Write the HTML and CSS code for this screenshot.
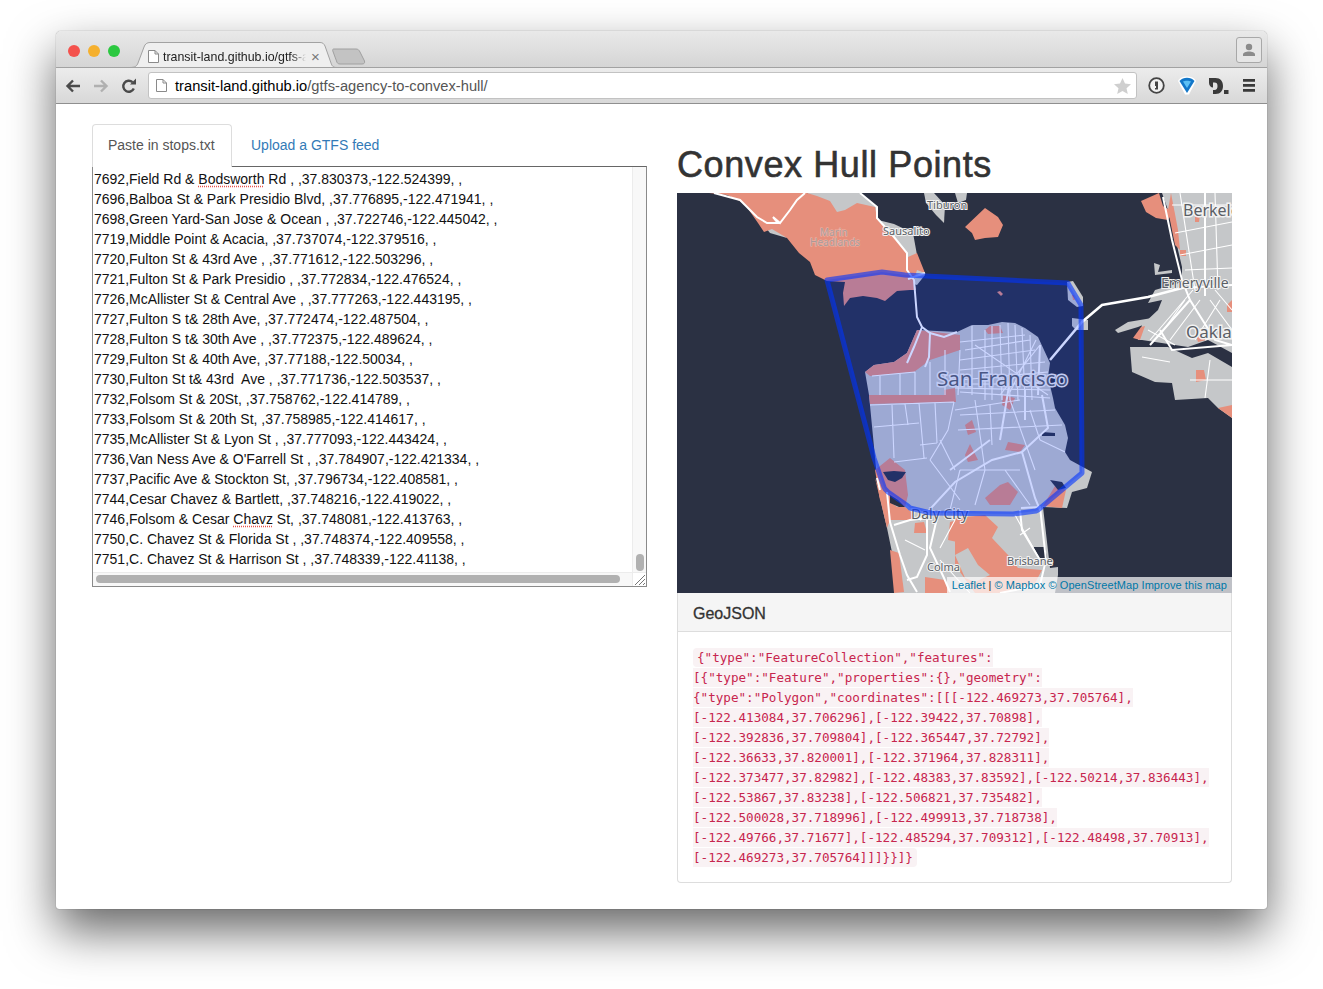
FILE: index.html
```html
<!DOCTYPE html>
<html lang="en">
<head>
  <meta charset="UTF-8" />
  <title>Convex Hull Points</title>
  <link rel="stylesheet" href="styles.css">
</head>
<body>
  <div class="window">

    <div class="tab-strip">
      <div class="lights">
        <span class="light red"></span>
        <span class="light amber"></span>
        <span class="light green"></span>
      </div>
      <div class="tab">
        <svg class="tab-shape" width="207" height="26" viewBox="0 0 207 26">
          <path class="tab-fill" d="M0 25.500C5 25.500 7 24 8 21L14 5C15 2 17 .5 20 .5H190C193 .5 194 2 195 4L201 21C202 24 203 25.500 207 25.500Z"/>
        </svg>
        <svg class="page-icon" width="11" height="13" viewBox="0 0 11 13">
          <path d="M.5.5H7L10.500 4V12.500H.5Z M7 .5V4H10.500" />
        </svg>
        <span class="tab-title">transit-land.github.io/gtfs-a</span>
        <span class="tab-close">×</span>
      </div>
      <svg class="new-tab" width="34" height="17" viewBox="0 0 34 17">
        <path d="M1.500 1H24C26 1 27 2 28 4L32.500 13C33 15 32 16 30 16H8C6 16 5 15 4.500 13L.8 3C.5 2 .7 1 1.500 1Z"/>
      </svg>
      <div class="profile-btn">
        <svg width="14" height="14" viewBox="0 0 14 14">
          <circle cx="7" cy="4" r="3.200"/>
          <path d="M1 13V11.500C1 9.500 4 8.500 7 8.500S13 9.500 13 11.500V13Z"/>
        </svg>
      </div>
    </div>

    <div class="toolbar">
      <svg class="nav-icon" width="16" height="14" viewBox="0 0 16 14">
        <path d="M15 7H3M8 1.500L2.500 7L8 12.500"/>
      </svg>
      <svg class="nav-icon off" width="16" height="14" viewBox="0 0 16 14">
        <path d="M1 7H13M8 1.500L13.500 7L8 12.500"/>
      </svg>
      <svg class="nav-icon" width="16" height="16" viewBox="0 0 16 16">
        <path d="M12.800 10.500A5.500 5.500 0 1 1 11.500 4.200"/>
        <path class="solid" d="M9 6.500H15V.5Z"/>
      </svg>
      <div class="omnibox">
        <svg class="page-icon" width="11" height="13" viewBox="0 0 11 13">
          <path d="M.5.5H7L10.500 4V12.500H.5Z M7 .5V4H10.500" />
        </svg>
        <span class="url"><span class="host">transit-land.github.io</span>/gtfs-agency-to-convex-hull/</span>
        <svg class="star" width="17" height="16" viewBox="0 0 17 16">
          <path d="M8.500 0L11 5.500L17 6.200L12.500 10.200L13.800 16L8.500 13L3.200 16L4.500 10.200L0 6.200L6 5.500Z"/>
        </svg>
      </div>
      <div class="extensions">
        <svg width="17" height="17" viewBox="0 0 17 17">
          <circle class="ring" cx="8.500" cy="8.500" r="7.300"/>
          <path class="keyhole" d="M7 4.500H10V12.500H7V11H8V9H7Z"/>
        </svg>
        <svg width="18" height="19" viewBox="0 0 18 19">
          <path class="gem-edge" d="M0 5C2 1.500 5 .5 9 .5S16 1.500 18 5L11 18.500H7Z"/>
          <path class="gem" d="M1.500 5C3.500 2.500 6 1.800 9 1.800S14.500 2.500 16.500 5L9 17Z"/>
          <path class="gem-shine" d="M5 5.500C7 4.500 11 4.500 13 5.500L9 12Z"/>
        </svg>
        <svg width="20" height="16" viewBox="0 0 20 16">
          <path class="dot-d" d="M0 0H6.500C11.500 0 14 3.500 14 8S11.500 16 6.500 16H4V12H5.500C7.500 12 8.500 10.500 8.500 8S7.500 4.500 5.500 4.500H4V9.500C2 9.500 0 7.500 0 5Z"/>
          <rect class="dot-d" x="15" y="12" width="4.500" height="4"/>
        </svg>
        <svg width="14" height="13" viewBox="0 0 14 13">
          <path class="dot-d" d="M1 0H13V2.800H1ZM1 5H13V7.800H1ZM1 10H13V12.800H1Z"/>
        </svg>
      </div>
    </div>

    <div class="page">
      <div class="col">
        <ul class="nav-tabs">
          <li class="active">Paste in stops.txt</li>
          <li class="link">Upload a GTFS feed</li>
        </ul>
        <div class="stops-box">
          <div class="stops-text">
            <div>7692,Field Rd &amp; <span class="typo">Bodsworth</span> Rd , ,37.830373,-122.524399, ,</div>
            <div>7696,Balboa St &amp; Park Presidio Blvd, ,37.776895,-122.471941, ,</div>
            <div>7698,Green Yard-San Jose &amp; Ocean , ,37.722746,-122.445042, ,</div>
            <div>7719,Middle Point &amp; Acacia, ,37.737074,-122.379516, ,</div>
            <div>7720,Fulton St &amp; 43rd Ave , ,37.771612,-122.503296, ,</div>
            <div>7721,Fulton St &amp; Park Presidio , ,37.772834,-122.476524, ,</div>
            <div>7726,McAllister St &amp; Central Ave , ,37.777263,-122.443195, ,</div>
            <div>7727,Fulton S t&amp; 28th Ave, ,37.772474,-122.487504, ,</div>
            <div>7728,Fulton S t&amp; 30th Ave , ,37.772375,-122.489624, ,</div>
            <div>7729,Fulton St &amp; 40th Ave, ,37.77188,-122.50034, ,</div>
            <div>7730,Fulton St t&amp; 43rd  Ave , ,37.771736,-122.503537, ,</div>
            <div>7732,Folsom St &amp; 20St, ,37.758762,-122.414789, ,</div>
            <div>7733,Folsom St &amp; 20th St, ,37.758985,-122.414617, ,</div>
            <div>7735,McAllister St &amp; Lyon St , ,37.777093,-122.443424, ,</div>
            <div>7736,Van Ness Ave &amp; O'Farrell St , ,37.784907,-122.421334, ,</div>
            <div>7737,Pacific Ave &amp; Stockton St, ,37.796734,-122.408581, ,</div>
            <div>7744,Cesar Chavez &amp; Bartlett, ,37.748216,-122.419022, ,</div>
            <div>7746,Folsom &amp; Cesar <span class="typo">Chavz</span> St, ,37.748081,-122.413763, ,</div>
            <div>7750,C. Chavez St &amp; Florida St , ,37.748374,-122.409558, ,</div>
            <div>7751,C. Chavez St &amp; Harrison St , ,37.748339,-122.41138, ,</div>
          </div>
          <div class="v-track"><span class="v-thumb"></span></div>
          <div class="h-track"><span class="h-thumb"></span></div>
          <div class="corner">
            <svg width="13" height="13" viewBox="0 0 13 13">
              <path d="M2 12L12 2M6 12L12 6M10 12L12 10"/>
            </svg>
          </div>
        </div>
      </div>

      <div class="col">
        <h1>Convex Hull Points</h1>

        <div class="map">
          <svg class="map-svg" width="555" height="400" viewBox="677 193 555 400">
            <rect class="water" x="677" y="193" width="555" height="400"/>

            <!-- land -->
            <path class="land" d="M807 193H860L877 207L878 220L894 224L913 233L917 255L925 275L917 285L900 280L860 250L830 215Z"/>
            <path class="land" d="M762 223L775 225L787 238L770 233Z"/>
            <path class="land" d="M924 193H934L945 205L944 223L936 215L926 203Z"/>
            <path class="land" d="M955 193H967L966 200L958 203Z"/>
            <path class="land" d="M865 372L874 365L894 362L907 353L917 330L957 332L972 325L988 325L1002 322L1015 323L1025 328L1038 337L1050 363L1048 377L1053 398L1055 408L1065 425L1068 438L1065 452L1070 460L1092 472L1087 488L1072 492L1067 508L1043 507L1050 568L1058 567L1058 575L1055 593H894L894 562L887 528L880 498L877 478L869 395Z"/>
            <path class="water" d="M1033 547H1045L1047 558H1038Z"/>
            <path class="land" d="M1067 282L1073 281L1083 297L1083 306L1077 307L1068 300Z"/>
            <path class="land" d="M1072 318L1088 320L1088 330L1076 330L1072 326Z"/>
            <path class="land" d="M1162 193H1232V353L1208 340L1188 347L1142 340L1138 340L1142 325L1158 310L1162 300L1148 303L1155 290L1182 282L1182 267L1178 250L1175 233L1168 210Z"/>
            <path class="land" d="M1115 330L1128 322L1152 318L1155 320L1138 327L1118 333Z"/>
            <path class="land" d="M1130 347L1168 347L1192 358L1208 353L1232 367V418L1218 408L1208 398L1175 400L1172 383L1155 382L1132 372Z"/>
            <path class="land" d="M1154 263L1160 265L1158 272L1172 270L1172 273L1155 275Z"/>

            <!-- parks -->
            <path class="park" d="M709 193L727 195L744 203L758 223L764 232L772 229L787 238L799 253L810 262L815 275L827 281L845 282L843 293L844 306L850 298L863 296L877 298L885 301L897 291L910 290L916 290L914 280L917 270L925 273L917 253L908 257L907 253L894 237L877 218L875 207L857 203L845 210L837 212L830 201L817 196L807 193Z"/>
            <path class="park" d="M965 227L985 208L998 217L1003 225L998 237L985 238L975 240L972 233Z"/>
            <path class="park" d="M1141 201L1159 193L1163 206L1173 212L1168 220L1156 218L1146 212Z"/>
            <path class="park" d="M1171 193L1178 230L1180 250L1175 245L1168 210Z"/>
            <path class="park" d="M1141 327L1145 326L1140 340L1133 338Z"/>
            <path class="park" d="M1218 408L1232 405V418Z"/>
            <path class="park" d="M865 372L874 365L894 362L907 353L917 330L960 335L960 350L930 360L914 372L870 376Z"/>
            <path class="park" d="M869 395H955L955 402L870 404Z"/>
            <path class="park" d="M875 470L890 458L905 470L908 495L905 507L880 500Z"/>
            <path class="park" d="M875 478L881 495L897 507L905 507L915 515L910 520L890 520L887 528Z"/>
            <path class="park" d="M985 498L1000 485L1008 482L1018 492L1010 505L990 505Z"/>
            <path class="park" d="M1055 486L1066 490L1062 508L1043 506Z"/>
            <path class="park" d="M915 523L924 522L927 533L914 533Z"/>
            <path class="park" d="M950 522L957 520V542L948 540Z"/>
            <path class="park" d="M955 518L985 515L998 527L992 538L1008 555L1018 568L1042 570L1035 583L1005 593H975L955 565Z"/>
            <path class="land" d="M955 555L968 548L978 565L990 575L975 582L965 578Z"/>
            <path class="park" d="M890 550L899 553L904 592L894 593Z"/>
            <path class="park" d="M925 577L945 580L950 593H925Z"/>
            <path class="park" d="M944 390L955 388L956 402L944 402Z"/>
            <path class="park" d="M965 455L970 444L978 460L968 462Z"/>
            <path class="park" d="M1003 395L1015 398L1010 410L1002 405Z"/>
            <path class="park" d="M965 425L972 420L976 432L968 435Z"/>
            <path class="park" d="M1008 442L1025 445L1020 452L1005 450Z"/>
            <path class="park" d="M985 330L990 326L1000 326L1003 333L988 334Z"/>
            <path class="park" d="M1196 335L1202 330L1206 340L1198 342Z"/>
            <path class="park" d="M1196 370L1204 370L1206 380L1196 382Z"/>
            <path class="park" d="M1000 291L1003 294L1001 296L997 292Z"/>
            <path class="park" d="M1072 295L1074 295L1075 300L1073 300Z"/>
            <path class="park" d="M1180 250L1186 250L1186 256L1180 256Z"/>
            <path class="park" d="M1195 215L1200 215L1199 222L1195 222Z"/>
            <path class="park" d="M1227 305L1232 300V312H1227Z"/>

            <!-- water over the land -->
            <path class="water" d="M883 472L894 471L906 472L902 478L895 482L888 480Z"/>
            <path class="water" d="M890 495L898 500L905 507L899 507L890 503Z"/>
            <path class="water" d="M1050 480L1062 482L1066 488L1058 490Z"/>
            <path class="water" d="M1042 432L1055 433L1055 436L1042 436Z"/>

            <!-- small roads -->
            <path class="road-thin" d="M870 405L954 402M892 405L894 458M874 427L919 423M919 403L924 458M920 445L937 443M927 458L894 462M954 402L948 430L930 460M905 404L908 425M935 403L937 443M940 440L955 470M960 350L958 395M965 350L1030 340M960 360L1035 350M960 370L1045 362M960 380L1048 372M985 330L985 400M1000 325L1002 400M1015 325L1018 400M1030 335L1032 400M975 345L1048 395M960 392L1050 398M955 410L1020 400M975 400L985 470M1010 400L1035 470M960 470L1020 470M930 460L960 500M1005 470L1030 505M985 470L975 505M960 470L950 510"/>
            <path class="road-thin" d="M872 376L915 372M880 376L880 395M900 374L900 395M915 372L915 395M930 362L930 395M945 350L945 395M960 342L1025 335M972 326L972 395M992 326L992 400M1008 323L1010 400M1022 328L1025 400M1040 345L1000 395M1036 340L1010 392M955 384L1048 384M955 388L1050 390M960 415L1055 410M958 430L1062 425M990 405L992 445M1030 410L1040 440M1040 440L1065 452"/>
            <path class="road-thin" d="M1172 205L1232 205M1180 193L1195 290M1215 193L1218 290M1175 233L1232 222M1180 255L1232 245M1185 270L1232 268M1193 290L1150 340M1200 300L1170 340M1210 300L1232 330M1148 330L1175 345M1215 290L1232 310M1205 340L1232 330M1142 357L1170 362M1190 380L1232 380M1210 360L1205 398M1185 300L1160 335M1220 300L1195 340"/>
            <path class="road-thin" d="M940 548L955 520M940 560L970 593M905 540L925 550M1015 515L1040 560M1020 535L1030 528"/>

            <!-- highways -->
            <path class="road" d="M714 193L740 200L757 217L767 223L778 223L773 217L780 223L790 210L797 200L805 193"/>
            <path class="road" d="M860 193L877 207L877 218L894 237L907 253L907 270L914 280L917 317L922 327L930 333L944 337L957 332"/>
            <path class="road" d="M922 327L914 347L907 363M930 333L929 357L925 367"/>
            <path class="road" d="M925 273L908 279"/>
            <path class="road wide" d="M1050 360L1082 322L1102 305L1148 297L1182 288"/>
            <path class="road" d="M1163 197L1172 240L1182 280L1190 300L1215 340L1232 345M1182 288L1232 285M1205 296L1205 193M1190 300L1150 345M1160 330L1172 350L1232 345"/>
            <path class="road" d="M1042 395L1048 428L1022 452L992 460L955 482L920 520M1022 452L1035 498L1040 510M1040 345L1038 395M1025 420L1025 390M1010 380L1000 440M950 470L990 440"/>
            <path class="road" d="M887 492L890 522L900 555L907 575L917 592M894 525L910 520L927 518L927 555L917 577L907 580M937 518L930 548L944 578L950 592M877 478L880 490"/>
            <path class="road" d="M1021 508L1040 507L1046 560L1040 585L1000 593M1020 510L1022 530L1040 560"/>

            <!-- labels -->
            <text class="label" x="927" y="209" font-size="11">Tiburon</text>
            <text class="label" x="883" y="235" font-size="11">Sausalito</text>
            <text class="label soft" x="820" y="236" font-size="10">Marin</text>
            <text class="label soft" x="810" y="246" font-size="10">Headlands</text>
            <text class="label big" x="1183" y="216" font-size="16">Berkeley</text>
            <text class="label" x="1161" y="288" font-size="14">Emeryville</text>
            <text class="label big" x="1186" y="338" font-size="17">Oakland</text>
            <text class="label big" x="937" y="386" font-size="20.500">San Francisco</text>
            <text class="label" x="911" y="519" font-size="14">Daly City</text>
            <text class="label" x="1007" y="565" font-size="11">Brisbane</text>
            <text class="label" x="927" y="571" font-size="11">Colma</text>

            <path class="hull" d="M931 513L1013 514L1036 511L1038 510L1082 473L1081 305L1069 285L1068 283L905 275L882 272L827 280L874 458L884 487L885 489L888 492L908 506L910 508Z"/>
          </svg>
          <div class="attribution">
            <a>Leaflet</a> | <a>© Mapbox</a> <a>© OpenStreetMap</a> <a>Improve this map</a>
          </div>
        </div>

        <div class="panel">
          <div class="panel-heading">GeoJSON</div>
          <div class="panel-body">
            <code>{"type":"FeatureCollection","features":<br>[{"type":"Feature","properties":{},"geometry":<br>{"type":"Polygon","coordinates":[[[-122.469273,37.705764],<br>[-122.413084,37.706296],[-122.39422,37.70898],<br>[-122.392836,37.709804],[-122.365447,37.72792],<br>[-122.36633,37.820001],[-122.371964,37.828311],<br>[-122.373477,37.82982],[-122.48383,37.83592],[-122.50214,37.836443],<br>[-122.53867,37.83238],[-122.506821,37.735482],<br>[-122.500028,37.718996],[-122.499913,37.718738],<br>[-122.49766,37.71677],[-122.485294,37.709312],[-122.48498,37.70913],<br>[-122.469273,37.705764]]]}}]}</code>
          </div>
        </div>
      </div>
    </div>

  </div>
</body>
</html>
```

FILE: styles.css
```css
* { box-sizing: border-box; }

body {
  margin: 0;
  padding: 31px 56px 80px;
  background: #fff;
  font-family: "Liberation Sans", Arial, sans-serif;
  font-size: 14px;
  color: #333;
}

.window {
  width: 1211px;
  height: 878px;
  background: #fff;
  border-radius: 5px 5px 3px 3px;
  box-shadow: 0 22px 48px rgba(0, 0, 0, 0.6), 0 0 1px rgba(0, 0, 0, 0.6);
}

/* browser chrome */

.tab-strip {
  height: 37px;
  display: flex;
  align-items: flex-end;
  padding: 0 5px 0 12px;
  background: linear-gradient(#e9e9e9, #d5d5d5);
  border-bottom: 1px solid #a2a2a2;
  border-radius: 5px 5px 0 0;
}

.lights {
  display: flex;
  gap: 8px;
  align-self: flex-start;
  margin-top: 14px;
}

.light {
  width: 12px;
  height: 12px;
  border-radius: 50%;
}

.light.red { background: #f4524d; }
.light.amber { background: #f5b02e; }
.light.green { background: #2bc840; }

.tab {
  position: relative;
  width: 207px;
  height: 25px;
  margin: 0 -5px -1px 10px;
  display: flex;
  align-items: center;
  padding: 2px 0 0 18px;
}

.tab-shape {
  position: absolute;
  left: 0;
  top: -1px;
}

.tab-fill {
  fill: #efefef;
  stroke: #a2a2a2;
}

.tab .page-icon {
  position: relative;
  flex: none;
}

.page-icon path {
  fill: #fff;
  stroke: #8a8a8a;
}

.tab-title {
  position: relative;
  width: 143px;
  margin-left: 4px;
  font-size: 12.4px;
  line-height: 16px;
  color: #222;
  white-space: nowrap;
  overflow: hidden;
  -webkit-mask-image: linear-gradient(90deg, #000 90%, transparent);
  mask-image: linear-gradient(90deg, #000 90%, transparent);
}

.tab-close {
  position: relative;
  margin-left: 5px;
  font-size: 15px;
  line-height: 14px;
  color: #777;
}

.new-tab {
  margin: 0 0 2px 0;
  flex: none;
}

.new-tab path {
  fill: #c3c3c3;
  stroke: #a0a0a0;
}

.profile-btn {
  width: 26px;
  height: 26px;
  margin: 0 0 4px auto;
  display: flex;
  align-items: center;
  justify-content: center;
  border: 1px solid #a8a8a8;
  border-radius: 3px;
  background: #e6e6e6;
}

.profile-btn svg { fill: #8b8b8b; }

.toolbar {
  height: 36px;
  display: flex;
  align-items: center;
  padding: 0 10px 0 9px;
  gap: 12px;
  background: linear-gradient(#ececec, #d8d8d8);
  border-bottom: 1px solid #8f8f8f;
}

.nav-icon {
  flex: none;
  fill: none;
  stroke: #4a4a4a;
  stroke-width: 2.4;
}

.nav-icon.off { stroke: #b0b0b0; }

.nav-icon .solid {
  fill: #4a4a4a;
  stroke: none;
}

.omnibox {
  width: 989px;
  height: 27px;
  margin-left: -1px;
  display: flex;
  align-items: center;
  padding: 0 5px 0 7px;
  background: #fff;
  border: 1px solid #c2c2c2;
  border-radius: 3px;
}

.url {
  margin-left: 8px;
  font-size: 14.7px;
  color: #555;
}

.url .host { color: #000; }

.star {
  margin-left: auto;
  fill: #cfcfcf;
}

.extensions {
  display: flex;
  align-items: center;
  gap: 13px;
  margin-left: -1px;
}

.ring {
  fill: #f0f0f0;
  stroke: #444;
  stroke-width: 1.8;
}

.keyhole { fill: #444; }
.gem-edge { fill: #fff; }
.gem { fill: #1277c9; }
.gem-shine { fill: #5cc0f5; }
.dot-d { fill: #3a3a3a; }

/* page */

.page {
  display: flex;
  gap: 30px;
  padding: 20px 35px 0 36px;
}

.col { width: 555px; }

.nav-tabs {
  display: flex;
  margin: 0;
  padding: 0;
  list-style: none;
  gap: 3px;
}

.nav-tabs li {
  height: 43px;
  padding: 10px 15px 0;
  line-height: 20px;
  border: 1px solid transparent;
  border-bottom: none;
  border-radius: 4px 4px 0 0;
}

.nav-tabs .active {
  width: 140px;
  color: #555;
  border-color: #ddd;
  background: #fff;
}

.nav-tabs .link { color: #337ab7; }

.stops-box {
  height: 421px;
  display: grid;
  grid-template-columns: 1fr 14px;
  grid-template-rows: 1fr 14px;
  border: 1px solid #8a8a8a;
  border-top-color: #666;
  margin-top: -1px;
  background: #fff;
  color: #111;
}

.stops-text {
  padding: 2px 2px 0 1px;
  line-height: 20px;
  overflow: hidden;
}

.stops-text div { white-space: pre; }

.typo {
  text-decoration: underline dotted #e8554e;
  text-underline-offset: 2px;
}

.v-track {
  display: flex;
  align-items: flex-end;
  justify-content: center;
  padding-bottom: 1px;
  background: #f8f8f8;
  border-left: 1px solid #ececec;
}

.v-thumb {
  width: 8px;
  height: 17px;
  border-radius: 4px;
  background: #b1b1b1;
}

.h-track {
  display: flex;
  align-items: center;
  padding: 0 0 2px 3px;
  background: #f8f8f8;
  border-top: 1px solid #ececec;
}

.h-thumb {
  width: 524px;
  height: 8px;
  border-radius: 4px;
  background: #b1b1b1;
}

.corner {
  display: flex;
  align-items: flex-end;
  justify-content: flex-end;
  background: #fff;
  border-left: 1px solid #ececec;
  border-top: 1px solid #ececec;
}

.corner path {
  stroke: #777;
  fill: none;
}

h1 {
  margin: 21px 0 8px;
  font-size: 36px;
  line-height: 40px;
  font-weight: 500;
  letter-spacing: 0.6px;
  -webkit-text-stroke: 0.6px #333;
  color: #333;
}

/* map */

.map {
  position: relative;
  height: 400px;
  overflow: hidden;
}

.map-svg { display: block; }

.water { fill: #2b3143; }
.land { fill: #c5c7c9; }
.park { fill: #e68f7c; }

.road {
  fill: none;
  stroke: #fff;
  stroke-width: 2;
}

.road.wide { stroke-width: 2.5; }

.road-thin {
  fill: none;
  stroke: #fff;
  stroke-width: 1.1;
}

.label {
  font-family: "Noto Sans", sans-serif;
  fill: #5b5f66;
  stroke: #f2f2f2;
  stroke-width: 2px;
  paint-order: stroke;
}

.label.soft {
  fill: #a99;
  stroke: #f0b8aa;
  stroke-width: 1px;
}

.label.big { stroke-width: 3px; }

.hull {
  fill: #0033ff;
  fill-opacity: 0.2;
  stroke: #0033ff;
  stroke-opacity: 0.6;
  stroke-width: 5;
  stroke-linejoin: round;
}

.attribution {
  position: absolute;
  right: 0;
  bottom: 0;
  height: 16px;
  padding: 0 5px;
  font-size: 11px;
  line-height: 16px;
  letter-spacing: 0.07px;
  color: #333;
  background: rgba(255, 255, 255, 0.7);
}

.attribution a { color: #0078a8; }

.panel {
  height: 290px;
  border: 1px solid #ddd;
  border-top: none;
  border-radius: 0 0 4px 4px;
}

.panel-heading {
  height: 39px;
  padding: 0 15px;
  line-height: 41px;
  font-size: 16px;
  -webkit-text-stroke: 0.3px #333;
  color: #333;
  background: #f5f5f5;
  border-bottom: 1px solid #ddd;
}

.panel-body {
  padding: 15px;
  line-height: 20px;
}

code {
  padding: 2px 4px;
  font-family: "DejaVu Sans Mono", monospace;
  font-size: 12.6px;
  line-height: 1;
  color: #c7254e;
  background: #f9f2f4;
  border-radius: 4px;
}
```
